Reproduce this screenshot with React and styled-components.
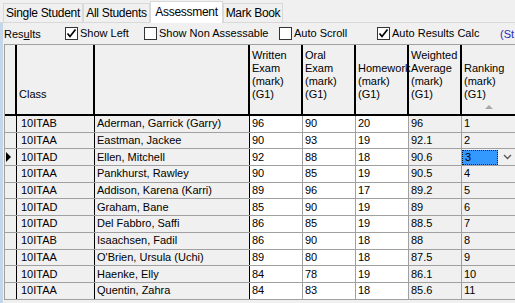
import React from 'react';
import styled, { createGlobalStyle } from 'styled-components';

const GlobalStyle = createGlobalStyle`
  html, body {
    margin: 0;
    padding: 0;
    background: #f0f0f0;
  }
  body {
    font-family: "Liberation Sans", Arial, sans-serif;
    font-size: 11px;
    color: #000;
  }
`;

const Window = styled.div`
  width: 515px;
  height: 303px;
  overflow: hidden;
  background: #f0f0f0;
`;

const TabStrip = styled.div`
  display: flex;
  align-items: flex-end;
  height: 22px;
  padding-left: 3px;
  border-bottom: 1px solid #d9d9d9;
`;

const Tab = styled.div`
  box-sizing: border-box;
  width: ${(p) => p.w}px;
  height: ${(p) => (p.active ? 22 : 19)}px;
  margin-bottom: ${(p) => (p.active ? -1 : 0)}px;
  padding-top: ${(p) => (p.active ? 3 : 2)}px;
  border: 1px solid #d9d9d9;
  border-bottom: none;
  background: ${(p) => (p.active ? '#fff' : '#f0f0f0')};
  text-align: center;
  font-size: 12px;
  letter-spacing: -0.3px;
  white-space: nowrap;
  position: relative;
  z-index: ${(p) => (p.active ? 1 : 0)};
`;

const Page = styled.div`
  border-left: 3px solid #c4d6ea;
  padding-left: 1px;
  height: 280px;
`;

const Toolbar = styled.div`
  display: flex;
  align-items: center;
  height: 21px;
  white-space: nowrap;
  overflow: hidden;
`;

const ResultsLabel = styled.span`
  width: 61px;
  flex: none;
  u {
    text-decoration: underline;
  }
`;

const CheckItem = styled.label`
  display: flex;
  align-items: center;
  gap: 2px;
  width: ${(p) => p.w}px;
  flex: none;
  margin-top: -1px;
`;

const Box = styled.span`
  box-sizing: border-box;
  width: 13px;
  height: 13px;
  border: 1px solid #333;
  background: #fff;
  display: flex;
  align-items: center;
  justify-content: center;
`;

const StatusLink = styled.span`
  color: #2b2bb8;
  flex: none;
`;

const Grid = styled.div`
  border-top: 1px solid #a0a0a0;
  border-left: 1px solid #a0a0a0;
  width: 600px;
`;

const cols = '12px 78px 155px 53px 53px 53px 53px 80px';

const HeadRow = styled.div`
  display: grid;
  grid-template-columns: ${cols};
  height: 71px;
  box-sizing: border-box;
  border-bottom: 2px solid #000;
  background: #f0f0f0;
`;

const HeadCell = styled.div`
  box-sizing: border-box;
  border-right: 2px solid #000;
  display: flex;
  flex-direction: column;
  justify-content: flex-end;
  align-items: flex-start;
  padding: 0 0 13px 2px;
  line-height: 13px;
  position: relative;
  white-space: nowrap;
`;

const SortArrow = styled.span`
  position: absolute;
  left: 23px;
  bottom: 5px;
  width: 0;
  height: 0;
  border-left: 4px solid transparent;
  border-right: 4px solid transparent;
  border-bottom: 4px solid #a8a8a8;
`;

const Row = styled.div`
  display: grid;
  grid-template-columns: ${cols};
  height: 16.7px;
  box-sizing: border-box;
  border-bottom: 1px solid #a0a0a0;
`;

const tones = { frozen: '#f0f0f0', edit: '#fff', calc: '#f0f0f0' };

const Cell = styled.div`
  box-sizing: border-box;
  background: ${(p) => tones[p.tone]};
  border-right: 1px solid ${(p) => (p.dark ? '#000' : '#a0a0a0')};
  padding-left: ${(p) => p.pad}px;
  line-height: 15px;
  white-space: nowrap;
  overflow: hidden;
  display: flex;
  align-items: center;
  position: relative;
`;

const Pointer = styled.span`
  width: 0;
  height: 0;
  border-top: 5px solid transparent;
  border-bottom: 5px solid transparent;
  border-left: 5px solid #000;
`;

const SelectedValue = styled.span`
  box-sizing: border-box;
  width: 36px;
  height: 15px;
  margin-left: -2px;
  padding-left: 2px;
  background: #3399ff;
  border: 1px dotted #1c1c1c;
  display: flex;
  align-items: center;
`;

const Chevron = styled.svg`
  margin-left: 5px;
`;

const headers = [
  [''],
  ['Class'],
  [''],
  ['Written', 'Exam', '(mark)', '(G1)'],
  ['Oral', 'Exam', '(mark)', '(G1)'],
  ['Homework', '(mark)', '(G1)'],
  ['Weighted', 'Average', '(mark)', '(G1)'],
  ['Ranking', '(mark)', '(G1)'],
];

const students = [
  ['10ITAB', 'Aderman, Garrick (Garry)', '96', '90', '20', '96', '1'],
  ['10ITAA', 'Eastman, Jackee', '90', '93', '19', '92.1', '2'],
  ['10ITAD', 'Ellen, Mitchell', '92', '88', '18', '90.6', '3'],
  ['10ITAA', 'Pankhurst, Rawley', '90', '85', '19', '90.5', '4'],
  ['10ITAA', 'Addison, Karena (Karri)', '89', '96', '17', '89.2', '5'],
  ['10ITAD', 'Graham, Bane', '85', '90', '19', '89', '6'],
  ['10ITAD', 'Del Fabbro, Saffi', '86', '85', '19', '88.5', '7'],
  ['10ITAB', 'Isaachsen, Fadil', '86', '90', '18', '88', '8'],
  ['10ITAA', "O'Brien, Ursula (Uchi)", '89', '80', '18', '87.5', '9'],
  ['10ITAD', 'Haenke, Elly', '84', '78', '19', '86.1', '10'],
  ['10ITAA', 'Quentin, Zahra', '84', '83', '18', '85.6', '11'],
];

const Check = ({ checked, label, w }) => (
  <CheckItem w={w}>
    <Box>
      {checked && (
        <svg width="11" height="11" viewBox="0 0 11 11">
          <path d="M1.5 5.5 L4 8.5 L9.5 1.5" fill="none" stroke="#000" strokeWidth="1.7" />
        </svg>
      )}
    </Box>
    <span>{label}</span>
  </CheckItem>
);

export default function App() {
  const current = 2;
  return (
    <Window>
      <GlobalStyle />
      <TabStrip>
        <Tab w={80}>Single Student</Tab>
        <Tab w={67}>All Students</Tab>
        <Tab w={73} active>Assessment</Tab>
        <Tab w={60}>Mark Book</Tab>
      </TabStrip>
      <Page>
        <Toolbar>
          <ResultsLabel>
            Res<u>u</u>lts
          </ResultsLabel>
          <Check w={79} checked label="Show Left" />
          <Check w={135} label="Show Non Assessable" />
          <Check w={98} label="Auto Scroll" />
          <Check w={123} checked label="Auto Results Calc" />
          <StatusLink>(St</StatusLink>
        </Toolbar>
        <Grid>
          <HeadRow>
            {headers.map((lines, i) => (
              <HeadCell key={i}>
                {lines.map((l, j) => (
                  <span key={j}>{l}</span>
                ))}
                {i === headers.length - 1 && <SortArrow />}
              </HeadCell>
            ))}
          </HeadRow>
          {students.map((s, r) => (
            <Row key={r}>
              <Cell tone="frozen" dark pad={1}>
                {r === current && <Pointer />}
              </Cell>
              <Cell tone="frozen" dark pad={4}>{s[0]}</Cell>
              <Cell tone="frozen" dark pad={2}>{s[1]}</Cell>
              <Cell tone="edit" pad={2}>{s[2]}</Cell>
              <Cell tone="edit" pad={2}>{s[3]}</Cell>
              <Cell tone="edit" pad={2}>{s[4]}</Cell>
              <Cell tone="calc" pad={2}>{s[5]}</Cell>
              <Cell tone="calc" pad={2}>
                {r === current ? (
                  <>
                    <SelectedValue>{s[6]}</SelectedValue>
                    <Chevron width="9" height="6" viewBox="0 0 9 6">
                      <path d="M1 1 L4.5 4.5 L8 1" fill="none" stroke="#5a5a5a" strokeWidth="1.4" />
                    </Chevron>
                  </>
                ) : (
                  s[6]
                )}
              </Cell>
            </Row>
          ))}
        </Grid>
      </Page>
    </Window>
  );
}
